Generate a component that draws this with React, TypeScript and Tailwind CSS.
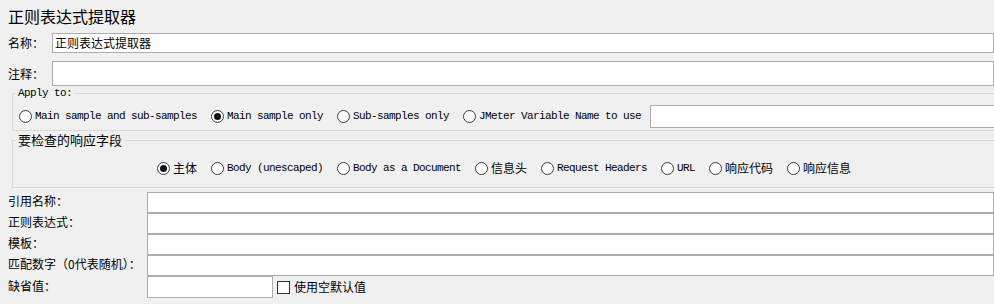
import React from "react";

const CJK = "font-['Noto_Sans_CJK_SC','Noto_Sans',sans-serif]";
const MONO = "font-['Liberation_Mono','Noto_Sans_CJK_SC',monospace] text-[11px] tracking-[-0.6px]";

function Radio({ checked }: { checked?: boolean }) {
  return (
    <span className="w-[13px] h-[13px] rounded-full border border-[#3c3c3c] bg-white flex items-center justify-center shrink-0">
      {checked && <span className="w-[7px] h-[7px] rounded-full bg-[#111]" />}
    </span>
  );
}

function RadioItem({ label, checked, mono }: { label: string; checked?: boolean; mono?: boolean }) {
  return (
    <label className="flex items-center gap-[3px] shrink-0">
      <Radio checked={checked} />
      <span className={mono ? MONO : "text-[12px]"}>{label}</span>
    </label>
  );
}

function Field({ className = "", value = "" }: { className?: string; value?: string }) {
  return (
    <div className={`bg-white border border-[#acacb0] flex items-center pl-[2px] text-[12px] ${className}`}>
      {value}
    </div>
  );
}

export default function App() {
  const lower = ["引用名称：", "正则表达式：", "模板：", "匹配数字（0代表随机）："];
  return (
    <div className={`w-[994px] h-[304px] overflow-hidden bg-[#f0f0f0] text-black ${CJK} leading-none`}>
      <div className="h-[33px] pl-2 pt-[6px] text-[16px] leading-[20px]">正则表达式提取器</div>

      <div className="flex items-center h-[20px]">
        <div className="w-[52px] pl-2 text-[12px]">名称：</div>
        <Field className="flex-1 h-[20px]" value="正则表达式提取器" />
      </div>

      <div className="flex items-center h-[25px] mt-[8px]">
        <div className="w-[52px] pl-2 text-[12px]">注释：</div>
        <Field className="flex-1 h-[25px]" />
      </div>

      <fieldset className="ml-3 -mr-2 mt-[1px] border border-[#d9d9d9] h-[44px]">
        <legend className={`ml-[3px] px-[2px] leading-[12px] ${MONO}`}>Apply to:</legend>
        <div className="flex items-center pl-[6px] pt-[6px] h-[29px] gap-[14px]">
          <RadioItem label="Main sample and sub-samples" mono />
          <RadioItem label="Main sample only" mono checked />
          <RadioItem label="Sub-samples only" mono />
          <div className="flex items-center gap-[9px] flex-1">
            <RadioItem label="JMeter Variable Name to use" mono />
            <Field className="flex-1 h-[23px]" />
          </div>
        </div>
      </fieldset>

      <fieldset className="ml-3 -mr-[2px] mt-[1px] border border-[#d9d9d9] h-[56px]">
        <legend className="ml-[3px] px-[2px] text-[13px] leading-[16px]">要检查的响应字段</legend>
        <div className="flex items-center justify-center pt-[10px] h-[30px] gap-[14px]">
          <RadioItem label="主体" checked />
          <RadioItem label="Body (unescaped)" mono />
          <RadioItem label="Body as a Document" mono />
          <RadioItem label="信息头" />
          <RadioItem label="Request Headers" mono />
          <RadioItem label="URL" mono />
          <RadioItem label="响应代码" />
          <RadioItem label="响应信息" />
        </div>
      </fieldset>

      <div className="mt-[4px] grid grid-cols-[139px_1fr] pl-2 text-[12px]">
        {lower.map((l) => (
          <React.Fragment key={l}>
            <div className="flex items-center h-[21px] pb-[3px]">{l}</div>
            <Field className="h-[21px]" />
          </React.Fragment>
        ))}
        <div className="flex items-center h-[22px] pb-[3px]">缺省值：</div>
        <div className="flex items-center h-[22px]">
          <Field className="w-[126px] h-[22px]" />
          <span className="ml-[4px] w-[13px] h-[13px] border border-[#333] bg-white shrink-0" />
          <span className="ml-[4px] text-[12px]">使用空默认值</span>
        </div>
      </div>
    </div>
  );
}
